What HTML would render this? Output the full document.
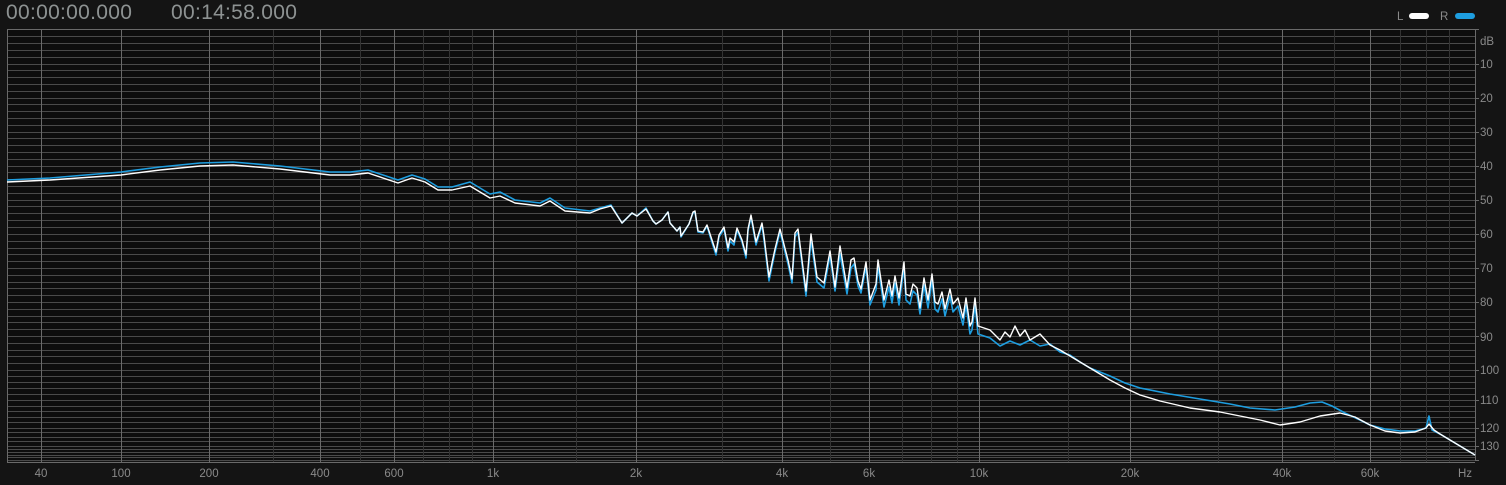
<!DOCTYPE html>
<html><head><meta charset="utf-8"><style>
html,body{margin:0;padding:0;background:#141414;width:1506px;height:485px;overflow:hidden;font-family:"Liberation Sans","DejaVu Sans",sans-serif}
.t{position:absolute;top:1px;font-size:21px;color:#8d9292;letter-spacing:0.3px}
</style></head><body>
<div class="t" style="left:6px">00:00:00.000</div>
<div class="t" style="left:171px">00:14:58.000</div>
<svg width="1506" height="485" style="position:absolute;left:0;top:0">
<rect x="7" y="29" width="1468" height="432" fill="#0d0d0d"/>
<g stroke="#4a4a4a" stroke-width="1">
<path d="M7 29.5H1475M7 36.5H1475M7 43.5H1475M7 50.5H1475M7 57.5H1475M7 64.5H1475M7 70.5H1475M7 77.5H1475M7 84.5H1475M7 91.5H1475M7 98.5H1475M7 104.5H1475M7 111.5H1475M7 118.5H1475M7 125.5H1475M7 132.5H1475M7 138.5H1475M7 145.5H1475M7 152.5H1475M7 159.5H1475M7 166.5H1475M7 172.5H1475M7 179.5H1475M7 186.5H1475M7 193.5H1475M7 200.5H1475M7 206.5H1475M7 213.5H1475M7 220.5H1475M7 227.5H1475M7 234.5H1475M7 241.5H1475M7 248.5H1475M7 254.5H1475M7 261.5H1475M7 268.5H1475M7 275.5H1475M7 282.5H1475M7 288.5H1475M7 295.5H1475M7 302.5H1475M7 309.5H1475M7 316.5H1475M7 322.5H1475M7 329.5H1475M7 336.5H1475M7 343.5H1475M7 350.5H1475M7 356.5H1475M7 363.5H1475M7 370.5H1475M7 376.5H1475M7 382.5H1475M7 388.5H1475M7 394.5H1475M7 400.5H1475M7 406.5H1475M7 411.5H1475M7 417.5H1475M7 422.5H1475M7 428.5H1475M7 432.5H1475M7 437.5H1475M7 441.5H1475M7 446.5H1475M7 449.5H1475M7 452.5H1475M7 455.5H1475M7 457.5H1475M7 460.5H1475"/>
</g>
<g stroke="#333" stroke-width="1">
<path d="M273.5 29V463M360.5 29V463M423.5 29V463M449.5 29V463M472.5 29V463M576.5 29V463M722.5 29V463M830.5 29V463M902.5 29V463M931.5 29V463M957.5 29V463M1068.5 29V463M1218.5 29V463M1334.5 29V463M1400.5 29V463M1426.5 29V463M1449.5 29V463"/>
</g>
<g stroke="#6a6a6a" stroke-width="1">
<path d="M7.5 29V463M41.5 29V463M121.5 29V463M209.5 29V463M320.5 29V463M394.5 29V463M493.5 29V463M636.5 29V463M782.5 29V463M869.5 29V463M979.5 29V463M1130.5 29V463M1282.5 29V463M1370.5 29V463"/>
<path d="M7 29.5H1475M1475.5 29V461M1475 29.5H1479M1475 64.5H1479M1475 98.5H1479M1475 132.5H1479M1475 166.5H1479M1475 200.5H1479M1475 234.5H1479M1475 268.5H1479M1475 302.5H1479M1475 336.5H1479M1475 370.5H1479M1475 400.5H1479M1475 428.5H1479M1475 446.5H1479M1475 460.5H1479M7 462.5H1475"/>
</g>
<path fill="none" stroke="#1e9ee0" stroke-width="1.6" stroke-linejoin="round" d="M7 180 L50 178 L121 172 L160 167 L200 163 L233 162 L280 166 L330 172 L350 172 L368 170 L398 180 L412 175 L425 179 L438 187 L452 187 L470 182 L490 194 L500 192 L515 200 L540 203 L550 198 L565 208 L590 211 L600 208 L611 205 L622 223 L632 213 L637 216 L646 208 L653 221 L656 224 L662 220 L668 212 L670 223 L677 231 L680 227 L681 237 L689 224 L693 213 L695 212 L698 232 L703 233 L707 226 L710 236 L716 255 L719 237 L724 229 L728 251 L730 241 L734 245 L737 230 L742 242 L746 258 L748 231 L751 217 L756 245 L762 225 L764 240 L769 281 L775 252 L780 232 L788 264 L792 283 L795 237 L798 232 L806 296 L811 240 L817 282 L824 288 L830 256 L835 291 L840 254 L847 294 L851 268 L854 264 L858 286 L861 293 L866 267 L870 305 L876 290 L878 266 L884 307 L889 287 L892 303 L895 283 L899 305 L904 267 L906 300 L910 304 L913 291 L917 295 L920 314 L924 285 L928 308 L932 280 L935 309 L938 312 L942 299 L945 316 L950 296 L953 312 L958 306 L963 325 L966 305 L970 334 L972 330 L975 305 L978 334 L990 338 L1000 346 L1010 341 L1020 345 L1030 340 L1040 346 L1050 344 L1060 352 L1070 355 L1080 362 L1090 368 L1100 372 L1110 376 L1125 383 L1140 388 L1170 394 L1200 399 L1230 404 L1250 408 L1275 410 L1295 407 L1310 403 L1322 402 L1332 406 L1345 413 L1360 420 L1370 425 L1385 429 L1400 431 L1415 431 L1426 428 L1429 416 L1432 430 L1440 434 L1450 440 L1460 446 L1475 455"/>
<path fill="none" stroke="#ffffff" stroke-width="1.4" stroke-linejoin="round" d="M7 182 L50 180 L121 175 L160 170 L200 166 L233 165 L280 169 L330 175 L350 175 L368 173 L398 183 L412 178 L425 182 L438 190 L452 190 L470 186 L490 198 L500 196 L515 203 L540 206 L550 201 L565 211 L590 213 L600 209 L611 206 L622 223 L632 213 L637 216 L646 209 L653 221 L656 224 L662 220 L668 212 L670 223 L677 231 L680 227 L681 236 L689 224 L693 212 L695 211 L698 231 L703 232 L707 225 L710 234 L716 252 L719 235 L724 227 L728 248 L730 238 L734 242 L737 228 L742 240 L746 255 L748 229 L751 215 L756 242 L762 223 L764 236 L769 277 L775 249 L780 229 L788 260 L792 279 L795 233 L798 229 L806 291 L811 234 L817 277 L824 283 L830 251 L835 287 L840 246 L847 288 L851 260 L854 258 L858 281 L861 289 L866 262 L870 300 L876 284 L878 260 L884 300 L889 280 L892 296 L895 276 L899 298 L904 262 L906 294 L910 296 L913 284 L917 288 L920 308 L924 278 L928 300 L932 274 L935 302 L938 304 L942 292 L945 309 L950 289 L953 304 L958 298 L963 318 L966 298 L970 326 L972 322 L975 298 L978 326 L990 330 L1000 340 L1005 332 L1010 337 L1015 326 L1020 336 L1025 330 L1030 340 L1040 334 L1050 345 L1060 350 L1070 356 L1080 362 L1090 368 L1100 374 L1110 380 L1125 388 L1140 395 L1160 401 L1190 408 L1220 412 L1240 416 L1260 420 L1280 425 L1300 422 L1320 416 L1340 413 L1355 417 L1370 425 L1385 431 L1400 433 L1415 432 L1426 428 L1429 424 L1434 430 L1440 434 L1450 440 L1460 446 L1475 455"/>
<g font-size="11.5" fill="#8a8a8a" font-family="Liberation Sans, DejaVu Sans, sans-serif">
<text x="1480" y="45">dB</text>
<text x="1480" y="68">10</text><text x="1480" y="102">20</text><text x="1480" y="136">30</text><text x="1480" y="170">40</text><text x="1480" y="204">50</text><text x="1480" y="238">60</text><text x="1480" y="272">70</text><text x="1480" y="306">80</text><text x="1480" y="341">90</text><text x="1480" y="374">100</text><text x="1480" y="404">110</text><text x="1480" y="432">120</text><text x="1480" y="450">130</text>
<g text-anchor="middle">
<text x="41" y="477">40</text><text x="121" y="477">100</text><text x="209" y="477">200</text><text x="320" y="477">400</text><text x="394" y="477">600</text><text x="493" y="477">1k</text><text x="636" y="477">2k</text><text x="782" y="477">4k</text><text x="869" y="477">6k</text><text x="979" y="477">10k</text><text x="1130" y="477">20k</text><text x="1282" y="477">40k</text><text x="1370" y="477">60k</text><text x="1465" y="477">Hz</text>
</g>
<text x="1397" y="20">L</text><text x="1440" y="20">R</text>
</g>
<rect x="1409" y="13" width="20" height="6" rx="3" fill="#fff"/>
<rect x="1455" y="13" width="20" height="6" rx="3" fill="#1e9ee0"/>
</svg>
</body></html>
